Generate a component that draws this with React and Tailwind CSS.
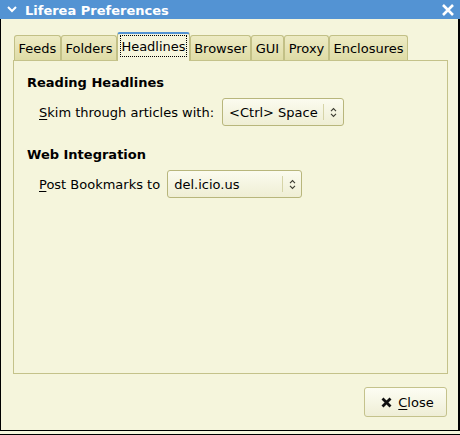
import React from "react";

const TABS = [
  { name: "Feeds", w: "w-[47px]" },
  { name: "Folders", w: "w-[56px]" },
  { name: "Headlines", w: "w-[73px]", active: true },
  { name: "Browser", w: "w-[61px]" },
  { name: "GUI", w: "w-[33px]" },
  { name: "Proxy", w: "w-[45px]" },
  { name: "Enclosures", w: "w-[79px]" },
];

function UpDown() {
  return (
    <svg width="7" height="11" viewBox="0 0 7 11" fill="none" stroke="#3a3a30" strokeWidth="1.1">
      <path d="M1 4.2 L3.5 1.6 L6 4.2" />
      <path d="M1 6.8 L3.5 9.4 L6 6.8" />
    </svg>
  );
}

function Combo({ value, width, textWidth }) {
  return (
    <div className={`flex items-stretch h-[28px] ${width} border border-[#b8b67c] rounded-[3px] bg-gradient-to-b from-[#fbfbef] to-[#efeed4]`}>
      <div className={`${textWidth} flex items-center pl-[6px]`}>{value}</div>
      <div className="w-px bg-[#d6d4a8] my-[5px]" />
      <div className="flex-1 flex items-center justify-center">
        <UpDown />
      </div>
    </div>
  );
}

export default function App() {
  return (
    <div className="w-[460px] h-[435px] bg-[#f5f5dc] flex flex-col text-[13px] leading-[15px] text-black font-['DejaVu_Sans',sans-serif]">
      {/* Title bar */}
      <div className="h-[19px] bg-[#5393d3] flex items-center shrink-0">
        <svg className="ml-[7px]" width="10" height="7" viewBox="0 0 10 7" fill="none" stroke="#fff" strokeWidth="2">
          <polyline points="1,1 5,5 9,1" />
        </svg>
        <span className="ml-[8px] mt-[2px] font-bold text-white">Liferea Preferences</span>
        <svg className="ml-auto mr-[6px]" width="12" height="12" viewBox="0 0 12 12" fill="none" stroke="#fff" strokeWidth="2.6">
          <path d="M1 1 L11 11 M11 1 L1 11" />
        </svg>
      </div>

      {/* Body */}
      <div className="h-[412px] shrink-0 border-l border-r-2 border-b border-black pt-[13px] pl-[12px] pr-[10px] flex flex-col">
        {/* Tabs */}
        <div className="h-[28px] flex items-end pl-px">
          {TABS.map((t) =>
            t.active ? (
              <div key={t.name} className={`${t.w} h-[29px] -mb-px relative z-10 bg-[#f5f5dc] border-x border-t-2 border-x-[#c2c086] border-t-[#5393d3] rounded-t-[3px] px-[2px] pt-px`}>
                <div className="h-[22px] border border-dotted border-black flex items-center justify-center pt-px">
                  {t.name}
                </div>
              </div>
            ) : (
              <div key={t.name} className={`${t.w} h-[25px] border-x border-t border-[#c2c086] rounded-t-[3px] bg-gradient-to-b from-[#edebc4] to-[#dfdca6] text-center pt-[5px]`}>
                {t.name}
              </div>
            )
          )}
        </div>

        {/* Pane */}
        <div className="h-[314px] border border-[#c4c28a] pt-[14px] pl-[13px]">
          <div className="font-bold">Reading Headlines</div>
          <div className="mt-[8px] pl-[12px] flex items-center gap-[8px]">
            <span>
              <span className="underline underline-offset-[2px]">S</span>kim through articles with:
            </span>
            <Combo value="<Ctrl> Space" width="w-[122px]" textWidth="w-[100px]" />
          </div>

          <div className="mt-[21px] font-bold">Web Integration</div>
          <div className="mt-[8px] pl-[12px] flex items-center gap-[7px]">
            <span>
              <span className="underline underline-offset-[2px]">P</span>ost Bookmarks to
            </span>
            <Combo value="del.icio.us" width="w-[135px]" textWidth="w-[114px]" />
          </div>
        </div>

        {/* Buttons */}
        <div className="mt-[13px] flex justify-end pr-px">
          <button className="w-[83px] h-[30px] border border-[#c4c28c] rounded-[3px] bg-gradient-to-b from-[#fdfdf3] to-[#efeed6] flex items-center justify-center gap-[6px] pl-[4px]">
            <svg width="11" height="11" viewBox="0 0 11 11" fill="none" stroke="#111" strokeWidth="2.8">
              <path d="M1.5 1.5 L9.5 9.5 M9.5 1.5 L1.5 9.5" />
            </svg>
            <span>
              <span className="underline underline-offset-[2px]">C</span>lose
            </span>
          </button>
        </div>
      </div>

      <div className="h-[3px] shrink-0" />
      <div className="h-px bg-black shrink-0" />
    </div>
  );
}
